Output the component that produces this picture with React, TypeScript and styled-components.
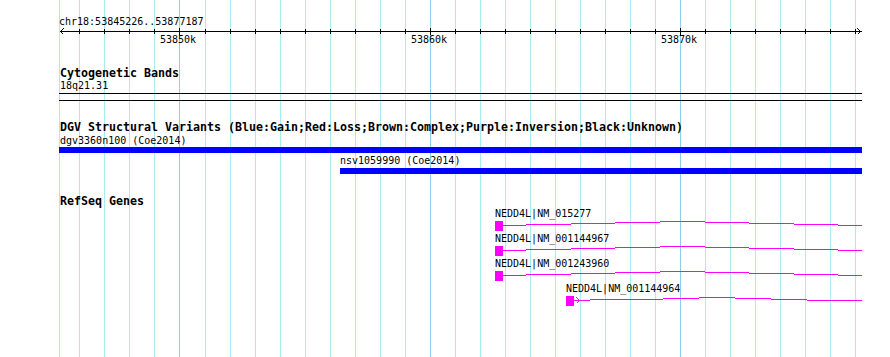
import styled, { createGlobalStyle } from 'styled-components';

const GlobalStyle = createGlobalStyle`
  html, body {
    margin: 0;
    padding: 0;
    background: #ffffff;
  }
  body {
    font-family: "DejaVu Sans Mono", "Liberation Mono", monospace;
    color: #000000;
  }
`;

// Page x of the panel's left edge; everything inside the panel is drawn
// relative to it.
const PANEL_LEFT = 59;
const PANEL_WIDTH = 803;

const MAGENTA = '#ff00ff';

// One grid line per kb, 53846k..53877k.
const GRID = Array.from({ length: 32 }, (_, i) => {
  const k = 53846 + i;
  return { k, x: 79 + 25 * i + (i >= 5 ? 1 : 0), major: k % 10 === 0 };
});

type Step = [number, number, number];

// Intron "hat" connectors, as flat runs of [fromX, toX, yOffset].
const HAT_LONG: Step[] = [
  [503, 526, 0],
  [526, 571, -1],
  [571, 615, -2],
  [615, 660, -3],
  [660, 705, -4],
  [705, 749, -3],
  [749, 794, -2],
  [794, 838, -1],
  [838, 862, 0],
];

const HAT_SHORT: Step[] = [
  [574, 590, 0],
  [590, 663, -1],
  [663, 699, -2],
  [699, 735, -3],
  [735, 771, -2],
  [771, 807, -1],
  [807, 862, 0],
];

const GENES = [
  { name: 'NEDD4L|NM_015277', x: 495, hat: HAT_LONG, strand: false },
  { name: 'NEDD4L|NM_001144967', x: 495, hat: HAT_LONG, strand: false },
  { name: 'NEDD4L|NM_001243960', x: 495, hat: HAT_LONG, strand: false },
  { name: 'NEDD4L|NM_001144964', x: 566, hat: HAT_SHORT, strand: true },
];

const Page = styled.div`
  display: flex;
  width: 890px;
  height: 357px;
  overflow: hidden;
`;

const Gutter = styled.div`
  flex: 0 0 ${PANEL_LEFT}px;
`;

const Panel = styled.div`
  position: relative;
  flex: 0 0 ${PANEL_WIDTH}px;
  display: flex;
  flex-direction: column;
`;

const GridLayer = styled.svg`
  position: absolute;
  top: 0;
  left: 0;
  z-index: 0;
`;

const Track = styled.section<{ $gap: number }>`
  position: relative;
  z-index: 1;
  display: flex;
  flex-direction: column;
  margin-top: ${({ $gap }) => $gap}px;
`;

const TrackTitle = styled.div`
  height: 13px;
  padding-left: 1px;
  font-weight: bold;
  font-size: 11.63px;
  line-height: 13px;
  white-space: pre;
`;

const FeatureLabel = styled.div<{ $gap?: number }>`
  height: 12px;
  margin-top: ${({ $gap }) => $gap ?? 0}px;
  font-size: 10px;
  line-height: 12px;
  white-space: pre;
`;

const RulerSvg = styled.svg`
  display: block;
`;

const TickLabels = styled.div`
  position: relative;
  height: 10px;
  font-size: 10px;
  line-height: 10px;
`;

const TickLabel = styled.span`
  position: absolute;
  top: 0;
  white-space: pre;
`;

const BandOutline = styled.div`
  box-sizing: border-box;
  height: 8px;
  margin-top: 1px;
  border-top: 1px solid #000000;
  border-bottom: 1px solid #000000;
`;

const VariantBar = styled.div<{ $gap: number }>`
  height: 6px;
  margin-top: ${({ $gap }) => $gap}px;
  background: #0000ff;
`;

const GeneRow = styled.div`
  display: flex;
  flex-direction: column;
  height: 25px;
`;

const GeneGlyph = styled.svg`
  display: block;
`;

function Grid() {
  return (
    <GridLayer width={PANEL_WIDTH} height={357} shapeRendering="crispEdges">
      <rect x={0} y={0} width={1} height={357} fill="#a6ecf0" />
      {GRID.map((g) => (
        <rect
          key={g.k}
          x={g.x - PANEL_LEFT}
          y={0}
          width={1}
          height={357}
          fill={g.major ? '#8ccfe8' : '#a6ecf0'}
        />
      ))}
    </GridLayer>
  );
}

function Ruler() {
  return (
    <Track $gap={16}>
      <FeatureLabel>chr18:53845226..53877187</FeatureLabel>
      <RulerSvg width={PANEL_WIDTH} height={7} shapeRendering="crispEdges">
        <rect x={1} y={3} width={802} height={1} fill="#000" />
        {GRID.map((g) => (
          <rect
            key={g.k}
            x={g.x - PANEL_LEFT}
            y={g.major ? 0 : 1}
            width={1}
            height={g.major ? 7 : 5}
            fill="#000"
          />
        ))}
        <polyline
          points="4.5,0.5 1.5,3.5 4.5,6.5"
          fill="none"
          stroke="#000"
          strokeWidth={1}
        />
        <polyline
          points="798.5,0.5 801.5,3.5 798.5,6.5"
          fill="none"
          stroke="#000"
          strokeWidth={1}
        />
      </RulerSvg>
      <TickLabels>
        {GRID.filter((g) => g.major).map((g) => (
          <TickLabel key={g.k} style={{ left: g.x - PANEL_LEFT - 19 }}>
            {g.k}k
          </TickLabel>
        ))}
      </TickLabels>
    </Track>
  );
}

function Gene({ gene }: { gene: (typeof GENES)[number] }) {
  const lineY = 5;
  return (
    <GeneRow>
      <FeatureLabel style={{ paddingLeft: gene.x - PANEL_LEFT }}>
        {gene.name}
      </FeatureLabel>
      <GeneGlyph width={PANEL_WIDTH} height={13} shapeRendering="crispEdges">
        {gene.hat.map(([from, to, dy]) => (
          <rect
            key={from}
            x={from - PANEL_LEFT}
            y={lineY + dy}
            width={to - from}
            height={1}
            fill={MAGENTA}
          />
        ))}
        <rect
          x={gene.x - PANEL_LEFT}
          y={lineY - 4}
          width={8}
          height={10}
          fill={MAGENTA}
        />
        {gene.strand && (
          <polyline
            points={`${gene.x + 10 - PANEL_LEFT + 0.5},${lineY - 2.5} ${
              gene.x + 13 - PANEL_LEFT + 0.5
            },${lineY + 0.5} ${gene.x + 10 - PANEL_LEFT + 0.5},${lineY + 3.5}`}
            fill="none"
            stroke={MAGENTA}
            strokeWidth={1}
          />
        )}
      </GeneGlyph>
    </GeneRow>
  );
}

export default function App() {
  return (
    <>
      <GlobalStyle />
      <Page>
        <Gutter />
        <Panel>
          <Grid />
          <Ruler />

          <Track $gap={22}>
            <TrackTitle>Cytogenetic Bands</TrackTitle>
            <FeatureLabel style={{ paddingLeft: 1 }}>18q21.31</FeatureLabel>
            <BandOutline />
          </Track>

          <Track $gap={20}>
            <TrackTitle>
              DGV Structural Variants
              (Blue:Gain;Red:Loss;Brown:Complex;Purple:Inversion;Black:Unknown)
            </TrackTitle>
            <FeatureLabel $gap={1} style={{ paddingLeft: 1 }}>
              dgv3360n100 (Coe2014)
            </FeatureLabel>
            <VariantBar $gap={0} />
            <FeatureLabel $gap={2} style={{ paddingLeft: 340 - PANEL_LEFT }}>
              nsv1059990 (Coe2014)
            </FeatureLabel>
            <VariantBar $gap={1} style={{ marginLeft: 340 - PANEL_LEFT }} />
          </Track>

          <Track $gap={21}>
            <TrackTitle>RefSeq Genes</TrackTitle>
            {GENES.map((g) => (
              <Gene key={g.name} gene={g} />
            ))}
          </Track>
        </Panel>
      </Page>
    </>
  );
}
